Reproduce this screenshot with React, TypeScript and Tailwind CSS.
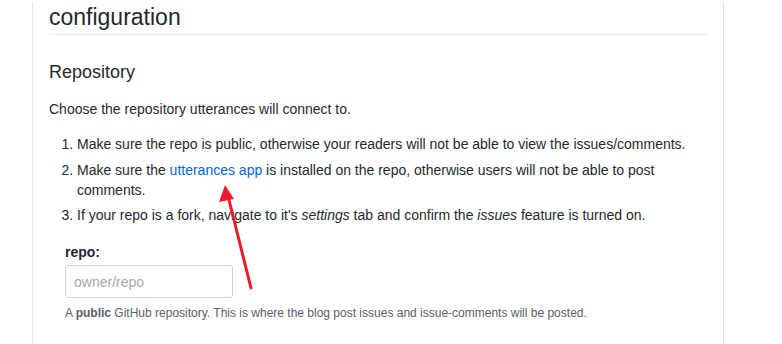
import React from 'react'

export default function App() {
  const font = { fontFamily: '"Segoe UI", "Liberation Sans", Arial, sans-serif' }
  return (
    <div className="h-[344px] w-[782px] overflow-hidden bg-white text-[#24292e]" style={font}>
      <div className="relative ml-[32px] h-full w-[692px] border-x border-[#e1e4e8] pl-[16px] pr-[15px]">
        {/* header */}
        <h1 className="mt-[2px] border-b border-[#eaecef] pb-[2px] text-[23px] font-normal leading-[30px]">configuration</h1>

        <h3 className="mt-[25px] text-[18px] font-normal leading-[24px]">Repository</h3>
        <p className="mt-[15px] text-[14px] leading-[20px]">Choose the repository utterances will connect to.</p>

        <ol className="mt-[15px] list-decimal pl-[28px] text-[14px] leading-[20px]">
          <li className="mt-0">Make sure the repo is public, otherwise your readers will not be able to view the issues/comments.</li>
          <li className="mt-[6px]">
            Make sure the <a className="text-[#0366d6]" href="#">utterances app</a> is installed on the repo, otherwise users will not be able to post comments.
          </li>
          <li className="mt-[5px]">
            If your repo is a fork, navigate to it's <em>settings</em> tab and confirm the <em>issues</em> feature is turned on.
          </li>
        </ol>

        <div className="mt-[17px] pl-[16px]">
          <label className="block text-[14px] font-semibold leading-[20px]">repo:</label>
          <input
            type="text"
            placeholder="owner/repo"
            className="mt-[3px] h-[33px] w-[168px] rounded-[3px] border border-[#d1d5da] px-[8px] text-[14px] placeholder:text-[#a3a8ad] outline-none"
          />
          <p className="mt-[6px] text-[12px] leading-[18px] text-[#586069]">
            A <strong className="font-semibold">public</strong> GitHub repository. This is where the blog post issues and issue-comments will be posted.
          </p>
        </div>
      </div>

      {/* annotation arrow */}
      <svg className="absolute left-0 top-0" width="782" height="344">
        <line x1="251" y1="288" x2="228" y2="196" stroke="#ea1c2c" strokeWidth="3" strokeLinecap="round" />
        <polygon points="225,185 219,202 234,199" fill="#ea1c2c" />
      </svg>
    </div>
  )
}
